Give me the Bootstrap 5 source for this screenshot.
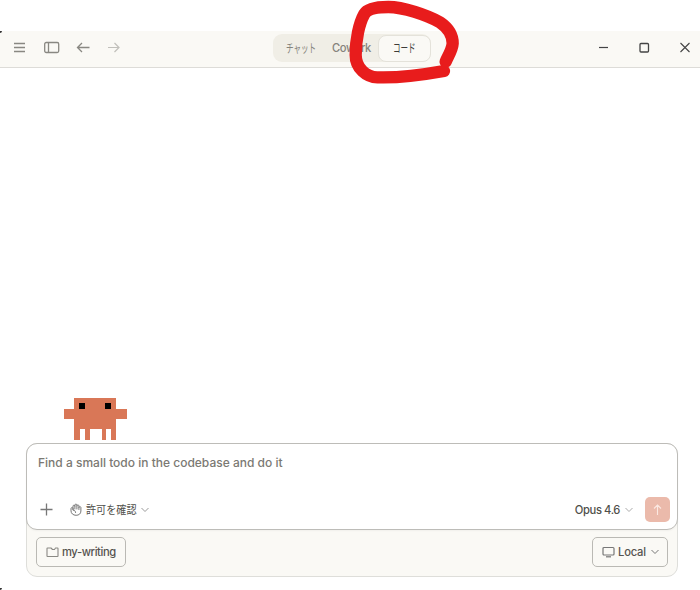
<!DOCTYPE html>
<html lang="ja">
<head>
<meta charset="utf-8">
<meta name="viewport" content="width=device-width, initial-scale=1">
<title>my-writing</title>
<link href="https://cdn.jsdelivr.net/npm/bootstrap@5.3.0/dist/css/bootstrap.min.css" rel="stylesheet">
<style>
body{width:700px;height:590px;overflow:hidden;background:#fff;color:#504f4b;font-family:Inter,"Noto Sans CJK JP",sans-serif;font-size:11.2px;line-height:16px}
svg{display:block;fill:none;flex:none}
svg:not([stroke]){stroke:currentColor}
.window-frame{height:590px;padding-top:31px}
.titlebar{height:37px;background:#faf9f5;border-bottom:1px solid #dddcd8;padding:0 7px 4px 12px;display:grid;grid-template-columns:261px 158px 1fr}
.tools{gap:16px;color:#898882}
.tabs-pill{height:28px;margin-top:3px;border-radius:9px;background:#f0eee6;color:#85837c}
.tab-item{height:28px;padding:0;background:none;border:0;color:inherit;font-size:11.2px;line-height:16px}
.tab-item.active{height:27px;width:53px;background:#faf9f5;border:1px solid #e4e2da;border-radius:8px;color:#3d3c39}
.jp{display:inline-block;transform-origin:0 50%;white-space:nowrap;text-align:left;font-family:"Noto Sans CJK JP",sans-serif}
.jp-chat{width:29px;font-size:12px;transform:translateX(1px) scaleX(.63)}
.jp-code{width:24px;font-size:12px;transform:scaleX(.63)}
.jp-perm{width:51px;font-size:11px;transform:translateY(-1px) scaleX(.92)}
.win-controls{gap:25px;color:#444}
.stage{height:375px;padding:0 22px 3px 64px}
.dock{margin:0 22px 0 26px;height:134px;border:1px solid #dededa;border-radius:11px;background:#faf9f5}
.composer{margin:-1px -1px 0;height:87px;border:1px solid #bdbcb8;border-radius:11px;background:#fff;padding:11px 7px 7px 11px;box-shadow:0 1px 2px #0000000a}
.prompt{font-size:12px;color:#7b7973;font-weight:500}
.cowork,.opus,.project,.local{font-weight:500;letter-spacing:-.4px;white-space:nowrap}
.icon-line{color:#777}
.send{width:25px;height:25px;border:0;border-radius:5px;background:#ebbaab;color:#fbe8e1}
.outlined{height:30px;border:1px solid #bab9b4;border-radius:5px;background:#faf9f5;color:#55534f;padding:0 9px;font-size:11.2px}
.btn-project{width:90px}
.btn-local{width:76px}
.dock-row{padding:7px 9px 0}
.ring{position:absolute;left:260px;top:0;pointer-events:none}
.edge{position:absolute;left:0;width:2px;height:2px;background:#333;border-bottom-right-radius:2px}
</style>
<script src="https://cdn.jsdelivr.net/npm/bootstrap@5.3.0/dist/js/bootstrap.bundle.min.js"></script>
</head>
<body>
<div class="window-frame position-relative">
  <header class="titlebar">
    <div class="tools d-flex align-items-center">
      <svg width="16" height="16" stroke-width="1.4"><path d="M2 4.500h11M2 8.500h11M2 12.500h11"/></svg>
      <svg width="16" height="16" stroke-width="1.3"><rect x="0.700" y="3.500" width="14" height="10" rx="1.500"/><path d="M4.500 3.500v10"/></svg>
      <svg width="16" height="16" stroke-width="1.300"><path d="M13.500 8.500H1.500M6 4 1.500 8.500 6 13"/></svg>
      <svg width="16" height="16" stroke-width="1.200" style="opacity:.5"><path d="M-1 8.500h12M6.500 4l4.500 4.500L6.500 13"/></svg>
    </div>
    <nav class="tabs-pill d-flex align-items-center">
      <button class="tab-item ms-1 ps-2 flex-shrink-0"><span class="jp jp-chat">チャット</span></button>
      <button class="tab-item ps-3 me-auto" style="margin-left:2px"><span class="cowork">Cowork</span></button>
      <button class="tab-item active flex-shrink-0"><span class="jp jp-code">コード</span></button>
    </nav>
    <div class="win-controls d-flex align-items-center justify-content-end">
      <svg width="16" height="16" stroke-width="1.200"><path d="M4 8.500h9"/></svg>
      <svg width="16" height="16" stroke-width="1.300"><rect x="4" y="4.500" width="8.500" height="8.500" rx="1"/></svg>
      <svg width="16" height="16" stroke-width="1.100"><path d="m3.500 4 9 9m0-9-9 9"/></svg>
    </div>
  </header>
  <main>
    <div class="stage d-flex align-items-end">
      <svg width="63" height="42" shape-rendering="crispEdges" stroke="none"><path fill="#d97757" d="M10 0h42v11h11v10H52v21h-5V31h-5v11h-4V31H26v11h-5V31h-5v11h-6V21H0V11h10z"/><path fill="#000" d="M15 5h6v6h-6zM41 5h6v6h-6z"/></svg>
    </div>
    <section class="dock">
      <div class="composer d-flex flex-column justify-content-between">
        <div class="prompt"><span>Find a small todo in the codebase and do it</span></div>
        <div class="d-flex align-items-center">
          <svg class="icon-line" width="16" height="15" stroke-width="1.300"><path d="M2.500 7.500h12M8.500 1.500v12"/></svg>
          <svg class="icon-line" width="12" height="13" viewBox="0 0 12 13" stroke-width="1" stroke-linecap="round" stroke-linejoin="round" style="margin-left:16px"><path d="M3 6.500V3c0-1.100 1.900-1.100 1.900 0v3M4.900 3V2c0-1.200 2-1.200 2 0v4M6.900 2.800c0-1.200 2-1.200 2 0v3.700M8.900 4.500c0-1.200 2-1.200 2 0V8c0 2.700-2 4.300-4.800 4.300C3 12.300 1 10.300 1 7.800V5.500c0-1.200 2-1.200 2 0v1.700c1.600 0 2.600.9 2.600 2.300"/></svg>
          <span class="jp jp-perm" style="margin-left:4px">許可を確認</span>
          <svg width="8" height="6" stroke="#999" style="margin-left:4px"><path d="m.5 1 3.500 3.500L7.500 1"/></svg>
          <span class="opus ms-auto">Opus 4.6</span>
          <svg width="8" height="6" stroke="#aaa" style="margin-left:5px;margin-right:12px"><path d="m.5 1 3.500 3.500L7.500 1"/></svg>
          <button class="send p-0 d-flex align-items-center justify-content-center"><svg width="11" height="13" stroke-width="1.100"><path d="M5.500 12V2M2 5.500 5.500 2 9 5.500"/></svg></button>
        </div>
      </div>
      <div class="dock-row d-flex justify-content-between">
        <button class="outlined btn-project d-flex align-items-center"><svg width="13" height="12" stroke="#8a8984" stroke-width="1.100"><path d="M1.500 2H5l1.500 1.500h2L9.500 2h2q.5 0 .5.500V10q0 .5-.5.500h-10Q1 10.500 1 10V2.500Q1 2 1.500 2z" stroke-linejoin="round"/></svg><span class="project" style="margin-left:3px">my-writing</span></button>
        <button class="outlined btn-local d-flex align-items-center"><svg width="13" height="12" stroke="#777" stroke-width="1.200"><rect x="1" y="1.500" width="11" height="7.500" rx="1"/><path d="M4 10.800h5"/></svg><span class="local" style="margin-left:3px;letter-spacing:-.2px">Local</span><svg width="8" height="6" stroke="#777" style="margin-left:5px"><path d="m.5 1 3.500 3.500L7.500 1"/></svg></button>
      </div>
    </section>
  </main>
  <i class="edge" style="top:31px"></i><i class="edge" style="top:588px"></i>
  <svg class="ring" width="210" height="95" viewBox="0 0 630 285" stroke="#e81c1c" stroke-width="37" stroke-linecap="round" stroke-linejoin="round"><path d="M557 185C562 172 577 150 578 130C578 105 562 82 540 67C500 45 430 21 385 21C350 21 322 27 313 42C297 70 287 120 287 165C287 205 320 232 352 232C410 234 480 226 552 213"/></svg>
</div>
</body>
</html>
